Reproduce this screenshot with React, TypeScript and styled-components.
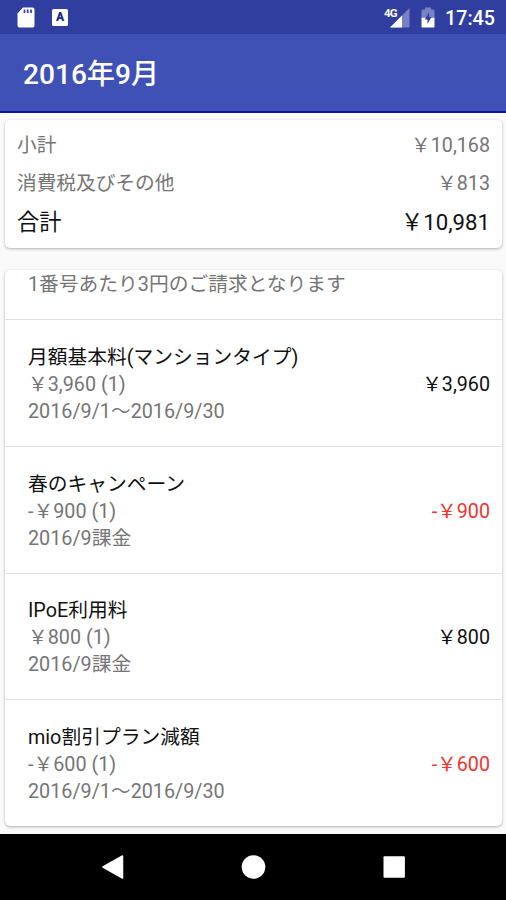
import React from "react";
import styled, { createGlobalStyle } from "styled-components";

const GlobalStyle = createGlobalStyle`
  * {
    box-sizing: border-box;
  }
  body {
    margin: 0;
    font-family: Roboto, "Noto Sans CJK JP", sans-serif;
  }
`;

const Screen = styled.div`
  display: flex;
  flex-direction: column;
  width: 506px;
  height: 900px;
  overflow: hidden;
  background-color: #fafafa;
`;

const StatusBar = styled.div`
  display: flex;
  justify-content: space-between;
  align-items: center;
  height: 34px;
  padding: 0 11px 0 17px;
  background-color: #303f9f;
  color: white;
`;

const StatusGroup = styled.div<{ $gap: number }>`
  display: flex;
  align-items: center;
  gap: ${(props) => props.$gap}px;
  svg {
    display: block;
  }
`;

const Clock = styled.span`
  font-size: 19.7px;
  font-weight: 500;
  line-height: 24px;
  margin: 3px 0 0 -1px;
`;

const AppBar = styled.header`
  display: flex;
  align-items: center;
  height: 79px;
  padding: 4px 23px 0;
  background-color: #3f51b5;
  border-bottom: 2px solid #0a159c;
`;

const Title = styled.h1`
  margin: 0;
  color: white;
  font-size: 28.1px;
  font-weight: 500;
  line-height: 36px;
`;

const Content = styled.main`
  display: flex;
  flex-direction: column;
  gap: 22px;
  height: 721px;
  padding: 7px 4px 0 5px;
`;

const Card = styled.section`
  border-radius: 5px;
  background-color: white;
  overflow: hidden;
  box-shadow: 0 1px 3px rgba(0, 0, 0, 0.3);
`;

const Summary = styled(Card)`
  height: 128px;
  padding: 4px 12px 0;
`;

const SummaryRow = styled.div<{ $total?: boolean }>`
  display: flex;
  justify-content: space-between;
  align-items: center;
  height: ${(props) => (props.$total ? 40 : 38)}px;
  color: ${(props) => (props.$total ? "#111" : "#757575")};
  font-size: ${(props) => (props.$total ? 22.2 : 19.7)}px;
`;

const Details = styled(Card)`
  height: 556px;
`;

const Item = styled.div`
  display: flex;
  justify-content: space-between;
  align-items: center;
  height: 126.6px;
  padding: 3px 12px 0 23px;
  border-top: 1.5px solid #e0e0e0;
`;

// scrolled partly out of the card
const NoticeItem = styled.div`
  height: 49.4px;
  padding: 1px 0 0 23px;
`;

const Line = styled.p<{ $main?: boolean }>`
  margin: 0;
  height: 27px;
  color: ${(props) => (props.$main ? "#111" : "#757575")};
  font-size: 19.75px;
  line-height: 27px;
  white-space: nowrap;
`;

const Price = styled.span<{ $minus: boolean }>`
  color: ${(props) => (props.$minus ? "#f4332a" : "#111")};
  font-size: 19.7px;
  line-height: 27px;
`;

const NavBar = styled.nav`
  display: flex;
  justify-content: center;
  align-items: center;
  gap: 116px;
  height: 66px;
  background-color: black;
  svg {
    display: block;
  }
`;

interface IItem {
  name: string;
  unit: string;
  period: string;
  price: string;
}

const items: IItem[] = [
  {
    name: "月額基本料(マンションタイプ)",
    unit: "￥3,960 (1)",
    period: "2016/9/1〜2016/9/30",
    price: "￥3,960",
  },
  {
    name: "春のキャンペーン",
    unit: "-￥900 (1)",
    period: "2016/9課金",
    price: "-￥900",
  },
  {
    name: "IPoE利用料",
    unit: "￥800 (1)",
    period: "2016/9課金",
    price: "￥800",
  },
  {
    name: "mio割引プラン減額",
    unit: "-￥600 (1)",
    period: "2016/9/1〜2016/9/30",
    price: "-￥600",
  },
];

function SdCardIcon() {
  return (
    <svg width="18" height="22" viewBox="0 0 18 22">
      <path
        d="M6 1.500h9.500a2 2 0 0 1 2 2v16a2 2 0 0 1-2 2h-13a2 2 0 0 1-2-2V7.500z"
        fill="white"
      />
      <path d="M7.500 3.500V7M10.700 3.500V7M14 3.500V7" stroke="#303f9f" strokeWidth="1.700" />
    </svg>
  );
}

const LetterBadge = styled.span`
  display: flex;
  justify-content: center;
  align-items: center;
  width: 16px;
  height: 17px;
  margin-left: 1px;
  border-radius: 1.5px;
  background-color: white;
  color: #1c2a8c;
  font-size: 12px;
  font-weight: 900;
  line-height: 17px;
`;

const Signal = styled.div`
  position: relative;
  width: 26px;
  height: 22px;
`;

const NetworkType = styled.span`
  position: absolute;
  left: 0;
  top: 1px;
  font-size: 11.5px;
  font-weight: 700;
  line-height: 12px;
  letter-spacing: -0.9px;
`;

function SignalIcon() {
  return (
    <Signal>
      <svg width="26" height="22" viewBox="0 0 26 22">
        <path d="M25.500 2v19.500H6z" fill="#7682c3" />
        <path d="M18 9.500v12H6z" fill="white" />
      </svg>
      <NetworkType>4G</NetworkType>
    </Signal>
  );
}

function BatteryIcon() {
  return (
    <svg width="14" height="22" viewBox="0 0 14 22">
      <path
        d="M4 1.500h6v2h2a1.500 1.500 0 0 1 1.500 1.500v7H.5V5A1.500 1.500 0 0 1 2 3.500h2z"
        fill="#7682c3"
      />
      <path d="M.5 11.700h13v8.800a1 1 0 0 1-1 1h-11a1 1 0 0 1-1-1z" fill="white" />
      <path d="M8 6.500l-4.300 7h2.800v4.500l4-7H8z" fill="#303f9f" />
    </svg>
  );
}

function App() {
  return (
    <>
      <GlobalStyle />
      <Screen>
        <StatusBar>
          <StatusGroup $gap={16}>
            <SdCardIcon />
            <LetterBadge>A</LetterBadge>
          </StatusGroup>
          <StatusGroup $gap={11}>
            <SignalIcon />
            <BatteryIcon />
            <Clock>17:45</Clock>
          </StatusGroup>
        </StatusBar>
        <AppBar>
          <Title>2016年9月</Title>
        </AppBar>
        <Content>
          <Summary>
            <SummaryRow>
              <span>小計</span>
              <span>￥10,168</span>
            </SummaryRow>
            <SummaryRow>
              <span>消費税及びその他</span>
              <span>￥813</span>
            </SummaryRow>
            <SummaryRow $total>
              <span>合計</span>
              <span>￥10,981</span>
            </SummaryRow>
          </Summary>
          <Details>
            <NoticeItem>
              <Line>1番号あたり3円のご請求となります</Line>
            </NoticeItem>
            {items.map((item) => (
              <Item key={item.name}>
                <div>
                  <Line $main>{item.name}</Line>
                  <Line>{item.unit}</Line>
                  <Line>{item.period}</Line>
                </div>
                <Price $minus={item.price.startsWith("-")}>{item.price}</Price>
              </Item>
            ))}
          </Details>
        </Content>
        <NavBar>
          <svg width="24" height="26" viewBox="0 0 24 26">
            <path
              d="M22.500 2v22L3 13z"
              fill="white"
              stroke="white"
              strokeWidth="1.500"
              strokeLinejoin="round"
            />
          </svg>
          <svg width="26" height="26" viewBox="0 0 26 26">
            <circle cx="13.500" cy="13" r="11.800" fill="white" />
          </svg>
          <svg width="24" height="26" viewBox="0 0 24 26">
            <rect x="1.500" y="2.300" width="21.400" height="21.400" rx="1" fill="white" />
          </svg>
        </NavBar>
      </Screen>
    </>
  );
}

export default App;
